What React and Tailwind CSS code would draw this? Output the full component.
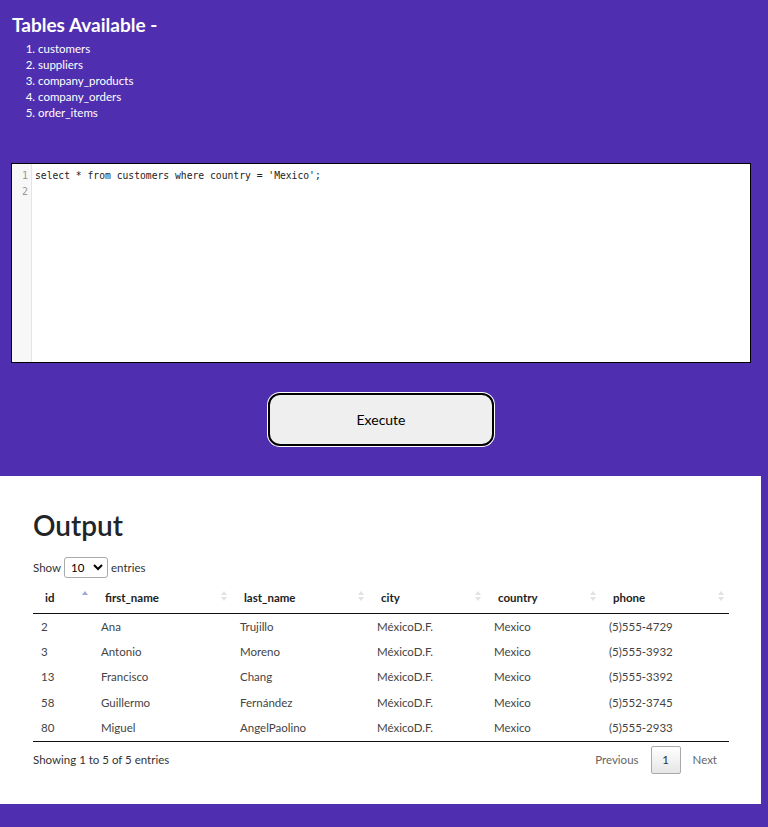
import { useState } from "react";

const tables = ["customers", "suppliers", "company_products", "company_orders", "order_items"];

const rows = [
  { id: 2, first_name: "Ana", last_name: "Trujillo", city: "MéxicoD.F.", country: "Mexico", phone: "(5)555-4729" },
  { id: 3, first_name: "Antonio", last_name: "Moreno", city: "MéxicoD.F.", country: "Mexico", phone: "(5)555-3932" },
  { id: 13, first_name: "Francisco", last_name: "Chang", city: "MéxicoD.F.", country: "Mexico", phone: "(5)555-3392" },
  { id: 58, first_name: "Guillermo", last_name: "Fernández", city: "MéxicoD.F.", country: "Mexico", phone: "(5)552-3745" },
  { id: 80, first_name: "Miguel", last_name: "AngelPaolino", city: "MéxicoD.F.", country: "Mexico", phone: "(5)555-2933" },
];

const cols = [
  { key: "id", w: "w-[60px]", asc: true },
  { key: "first_name", w: "w-[139px]" },
  { key: "last_name", w: "w-[137px]" },
  { key: "city", w: "w-[117px]" },
  { key: "country", w: "w-[115px]" },
  { key: "phone", w: "w-[128px]" },
];

function SortIcon({ asc }) {
  return (
    <svg width="6" height="10" viewBox="0 0 6 10" className="absolute right-[5px] top-[7px]">
      <path d="M3 0 L6 4 L0 4 Z" fill={asc ? "#a0a8d8" : "#e2e2e2"} />
      {!asc && <path d="M3 10 L6 6 L0 6 Z" fill="#e2e2e2" />}
    </svg>
  );
}

export default function App() {
  const [query] = useState("select * from customers where country = 'Mexico';");

  return (
    <div className="min-h-[827px] bg-[#4f2fb0] font-['Lato',sans-serif] pb-[23px]">
      {/* TABLES */}
      <div className="px-3 pt-[13px] text-white">
        <h2 className="text-[19px] font-bold leading-[24px]">Tables Available -</h2>
        <ol className="list-decimal pl-[26px] mt-[4px] text-[11.5px] leading-[16px]">
          {tables.map((t) => (
            <li key={t}>{t}</li>
          ))}
        </ol>
      </div>

      {/* EDITOR */}
      <div className="mx-[11px] mt-[42px] w-[740px] h-[200px] bg-white border border-black flex">
        <div className="w-[20px] bg-[#f7f7f7] border-r border-[#e5e5e5] font-['DejaVu_Sans_Mono',monospace] text-[10px] text-[#999] text-right pr-[3px] pt-[4px] leading-[16px]">
          <div>1</div>
          <div>2</div>
        </div>
        <div className="pl-[3px] pt-[4px] font-['DejaVu_Sans_Mono',monospace] text-[9.7px] leading-[16px] text-[#222]">
          <div>{query}</div>
        </div>
      </div>

      {/* BUTTON */}
      <div className="flex justify-center mt-[30px] pr-[6px]">
        <button className="w-[226px] h-[53px] rounded-[12px] bg-[#efefef] border-2 border-black ring-1 ring-white text-[14px] text-black">
          Execute
        </button>
      </div>

      {/* OUTPUT */}
      <div className="mt-[30px] w-[761px] bg-white px-[33px] pt-[31px] pb-[30px]">
        <h1 className="text-[28px] font-semibold text-[#212529] leading-[36px]">Output</h1>

        <div className="mt-[14px] flex items-center gap-[3px] text-[11.5px] text-[#333]">
          <span>Show</span>
          <div className="relative w-[44px] h-[21px] border border-[#aaa] rounded-[3px] flex items-center pl-[6px] text-[11.5px] text-black">
            10
            <svg width="10" height="7" viewBox="0 0 10 7" className="absolute right-[4px] top-[6px]">
              <path d="M1 1 L5 5 L9 1" stroke="#000" strokeWidth="2" fill="none" />
            </svg>
          </div>
          <span>entries</span>
        </div>

        <table className="mt-[6px] w-[696px] table-fixed border-collapse text-[11.5px]">
          <thead>
            <tr className="border-b border-[#111]">
              {cols.map((c) => (
                <th key={c.key} className={`${c.w} relative text-left font-bold text-[#222] pl-3 pt-[6px] pb-[7px] leading-[16px]`}>
                  {c.key}
                  <SortIcon asc={c.asc} />
                </th>
              ))}
            </tr>
          </thead>
          <tbody className="border-b border-[#111]">
            {rows.map((r) => (
              <tr key={r.id} className="h-[25.6px]">
                {cols.map((c) => (
                  <td key={c.key} className="pl-2 text-[#444] leading-[16px]">
                    {r[c.key]}
                  </td>
                ))}
              </tr>
            ))}
          </tbody>
        </table>

        <div className="mt-[4px] w-[696px] flex items-center justify-between text-[11.5px] text-[#333]">
          <span className="mt-[-1px]">Showing 1 to 5 of 5 entries</span>
          <div className="flex items-center text-[#666]">
            <span className="px-[12px]">Previous</span>
            <span className="w-[30px] h-[28px] flex items-center justify-center border border-[#aaa] rounded-[2px] bg-gradient-to-b from-white to-[#e6e6e6] text-[#333]">
              1
            </span>
            <span className="px-[12px]">Next</span>
          </div>
        </div>
      </div>
    </div>
  );
}
